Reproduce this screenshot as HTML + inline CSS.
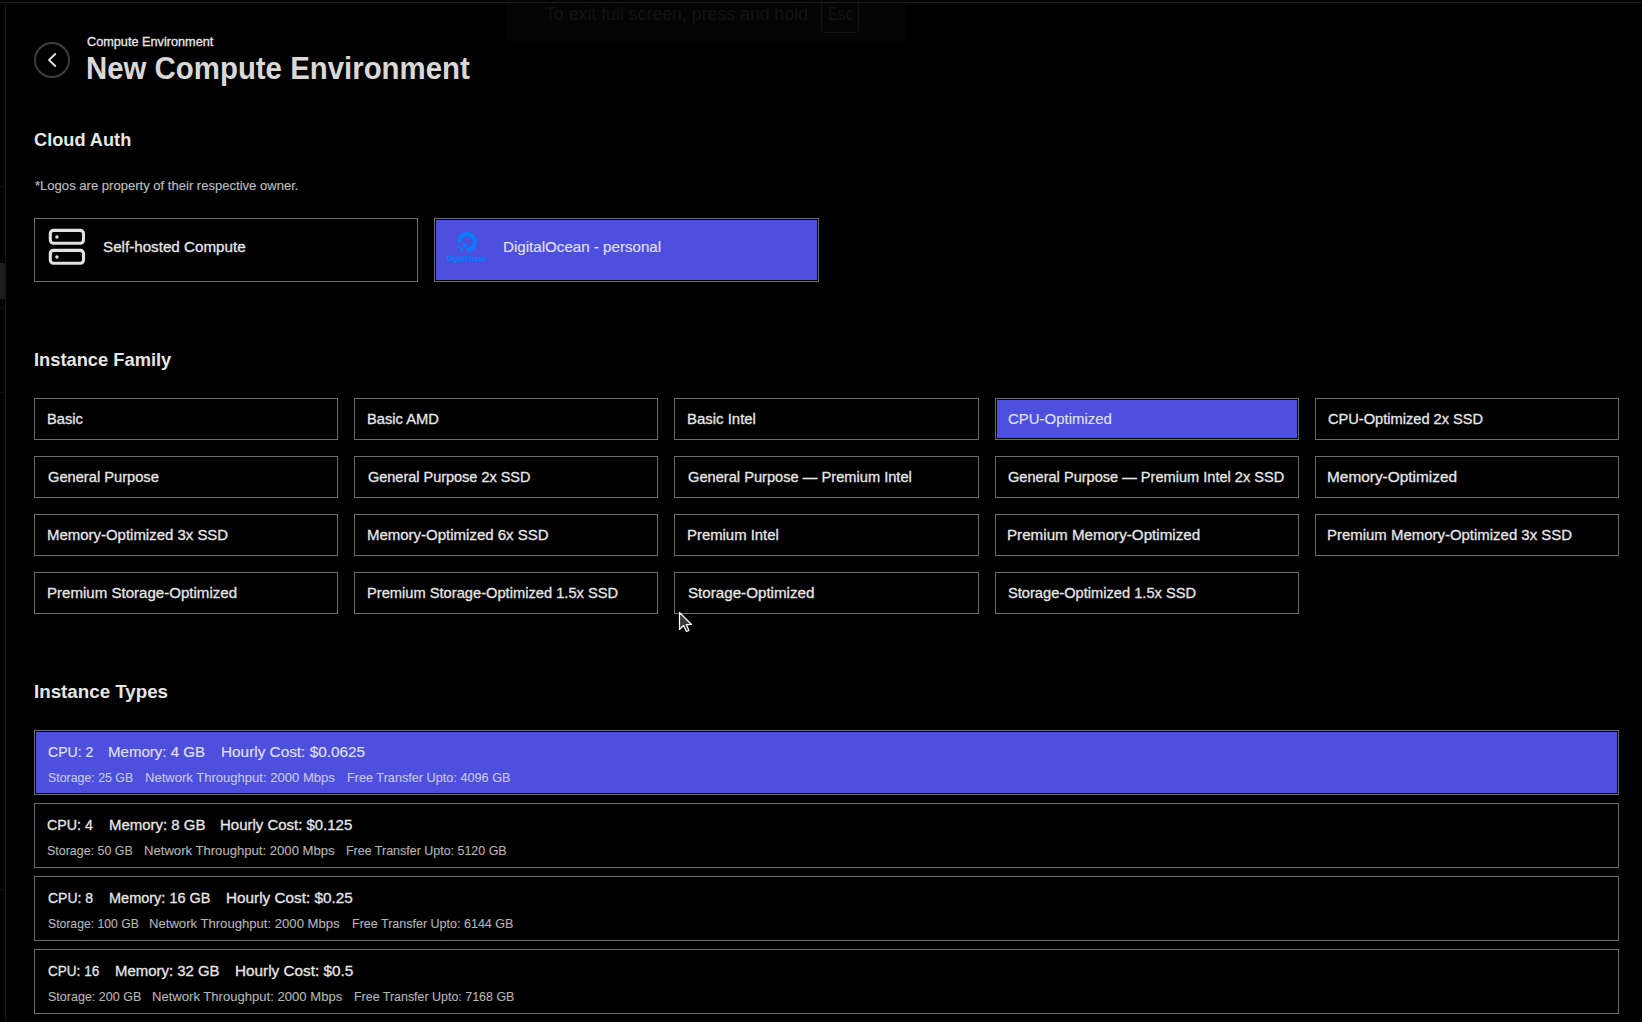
<!DOCTYPE html>
<html><head><meta charset="utf-8"><style>
html,body{margin:0;padding:0;background:#000;width:1642px;height:1022px;overflow:hidden}
.abs{position:absolute}
.t{position:absolute;font-family:"Liberation Sans",sans-serif;white-space:pre;transform-origin:0 0}
.b{position:absolute;box-sizing:border-box;border:1px solid #6b6b6b}
.b.sel{background:#4d4fdd;box-shadow:inset 0 0 0 1px #000}
</style></head><body>

<div class="abs" style="left:505px;top:0;width:401px;height:41px;background:#040404"></div>
<div class="abs" style="left:545px;top:2px;font-family:'Liberation Sans';font-size:18px;line-height:24px;color:#131313;white-space:pre;transform-origin:0 0;transform:scaleX(0.985)">To exit full screen, press and hold</div>
<div class="abs" style="left:821px;top:-6px;width:38px;height:39px;border:1px solid #121212;border-radius:3px;box-sizing:border-box"></div>
<div class="abs" style="left:828px;top:2px;font-family:'Liberation Sans';font-size:18px;line-height:24px;color:#131313;transform-origin:0 0;transform:scaleX(0.84)">Esc</div>


<div class="abs" style="left:0;top:2px;width:1642px;height:1px;background:#1c1c1c"></div>
<div class="abs" style="left:5px;top:3px;width:1px;height:1019px;background:#161616"></div>
<div class="abs" style="left:0;top:263px;width:5px;height:36px;background:#1c1c1c"></div>
<div class="abs" style="left:0;top:186px;width:5px;height:1px;background:#0f0f0f"></div>
<div class="abs" style="left:0;top:307px;width:5px;height:1px;background:#0f0f0f"></div>
<div class="abs" style="left:0;top:392px;width:5px;height:1px;background:#0f0f0f"></div>
<div class="abs" style="left:0;top:889px;width:5px;height:1px;background:#0f0f0f"></div>

<div class="b" style="left:34.00px;top:398px;width:304.20px;height:42px"></div><div class="b" style="left:354.20px;top:398px;width:304.20px;height:42px"></div><div class="b" style="left:674.40px;top:398px;width:304.20px;height:42px"></div><div class="b sel" style="left:994.60px;top:398px;width:304.20px;height:42px"></div><div class="b" style="left:1314.80px;top:398px;width:304.20px;height:42px"></div><div class="b" style="left:34.00px;top:456px;width:304.20px;height:42px"></div><div class="b" style="left:354.20px;top:456px;width:304.20px;height:42px"></div><div class="b" style="left:674.40px;top:456px;width:304.20px;height:42px"></div><div class="b" style="left:994.60px;top:456px;width:304.20px;height:42px"></div><div class="b" style="left:1314.80px;top:456px;width:304.20px;height:42px"></div><div class="b" style="left:34.00px;top:514px;width:304.20px;height:42px"></div><div class="b" style="left:354.20px;top:514px;width:304.20px;height:42px"></div><div class="b" style="left:674.40px;top:514px;width:304.20px;height:42px"></div><div class="b" style="left:994.60px;top:514px;width:304.20px;height:42px"></div><div class="b" style="left:1314.80px;top:514px;width:304.20px;height:42px"></div><div class="b" style="left:34.00px;top:572px;width:304.20px;height:42px"></div><div class="b" style="left:354.20px;top:572px;width:304.20px;height:42px"></div><div class="b" style="left:674.40px;top:572px;width:304.20px;height:42px"></div><div class="b" style="left:994.60px;top:572px;width:304.20px;height:42px"></div><div class="b sel" style="left:34px;top:730px;width:1585px;height:65px"></div><div class="b" style="left:34px;top:803px;width:1585px;height:65px"></div><div class="b" style="left:34px;top:876px;width:1585px;height:65px"></div><div class="b" style="left:34px;top:949px;width:1585px;height:65px"></div><div class="b" style="left:34px;top:218px;width:384.25px;height:64px"></div><div class="b sel" style="left:434.25px;top:218px;width:384.25px;height:64px"></div>

<svg class="abs" style="left:0;top:0" width="1642" height="1022" viewBox="0 0 1642 1022">
  <circle cx="52" cy="60" r="17" fill="none" stroke="#3b3c3b" stroke-width="2"/>
  <path d="M55.3 54 L49 60 L55.3 66" fill="none" stroke="#e2e2e2" stroke-width="1.8" stroke-linecap="round" stroke-linejoin="round"/>
  <rect x="50.3" y="230.4" width="33.2" height="12.9" rx="3.2" fill="none" stroke="#e2e2e2" stroke-width="3.1"/>
  <rect x="50.3" y="250.4" width="33.2" height="12.9" rx="3.2" fill="none" stroke="#e2e2e2" stroke-width="3.1"/>
  <circle cx="56.9" cy="237" r="1.7" fill="#e2e2e2"/>
  <circle cx="56.9" cy="257" r="1.7" fill="#e2e2e2"/>
  <!-- DigitalOcean logo -->
  <path d="M456.9 242 A10 10 0 1 1 467 252 L467 248 A6 6 0 1 0 461 242 Z" fill="#0080ff"/>
  <rect x="463.1" y="244" width="3.8" height="3.6" fill="#0080ff"/>
  <rect x="460" y="248.2" width="3" height="2.8" fill="#0080ff"/>
  <rect x="457.7" y="245.6" width="2.3" height="2.4" fill="#0080ff"/>
  <text x="446.9" y="261.2" font-family="Liberation Sans" font-weight="400" font-size="8" fill="#0080ff" stroke="#0080ff" stroke-width="0.35" textLength="40" lengthAdjust="spacingAndGlyphs">DigitalOcean</text>
  <!-- cursor -->
  <path d="M679.5 612.5 L679.5 629.5 L683.5 625.5 L686.5 631.5 L689 630.5 L686.3 624.6 L691.5 624.5 Z" fill="#3a3a3a" stroke="#ffffff" stroke-width="1.2" stroke-linejoin="round"/>
</svg>
<div class="t" style="left:86.50px;top:36px;font-size:12.5px;line-height:12.5px;font-weight:400;color:#e6e6e6;-webkit-text-stroke:0.3px #e6e6e6;transform:scaleX(1.0153)">Compute Environment</div><div class="t" style="left:85.58px;top:53px;font-size:30.6px;line-height:30.6px;font-weight:700;color:#d8d8d8;transform:scaleX(0.9608)">New Compute Environment</div><div class="t" style="left:34.40px;top:131px;font-size:18.4px;line-height:18.4px;font-weight:700;color:#e6e6e6;transform:scaleX(0.9885)">Cloud Auth</div><div class="t" style="left:34.80px;top:180px;font-size:12.8px;line-height:12.8px;font-weight:400;color:#bdbdbd;-webkit-text-stroke:0.15px #bdbdbd;transform:scaleX(1.0204)">*Logos are property of their respective owner.</div><div class="t" style="left:103.30px;top:239px;font-size:15px;line-height:15px;font-weight:400;color:#e6e6e6;-webkit-text-stroke:0.3px #e6e6e6;transform:scaleX(1.0123)">Self-hosted Compute</div><div class="t" style="left:502.79px;top:239px;font-size:15px;line-height:15px;font-weight:400;color:#e0e0ea;-webkit-text-stroke:0.15px #e0e0ea;transform:scaleX(1.0089)">DigitalOcean - personal</div><div class="t" style="left:33.61px;top:351px;font-size:18.4px;line-height:18.4px;font-weight:700;color:#e6e6e6;transform:scaleX(0.9945)">Instance Family</div><div class="t" style="left:33.58px;top:683px;font-size:18.4px;line-height:18.4px;font-weight:700;color:#e6e6e6;transform:scaleX(1.0193)">Instance Types</div><div class="t" style="left:46.82px;top:411px;font-size:15px;line-height:15px;font-weight:400;color:#e6e6e6;-webkit-text-stroke:0.3px #e6e6e6;transform:scaleX(0.9784)">Basic</div><div class="t" style="left:366.92px;top:411px;font-size:15px;line-height:15px;font-weight:400;color:#e6e6e6;-webkit-text-stroke:0.3px #e6e6e6;transform:scaleX(0.9803)">Basic AMD</div><div class="t" style="left:686.90px;top:411px;font-size:15px;line-height:15px;font-weight:400;color:#e6e6e6;-webkit-text-stroke:0.3px #e6e6e6;transform:scaleX(0.9961)">Basic Intel</div><div class="t" style="left:1007.90px;top:411px;font-size:15px;line-height:15px;font-weight:400;color:#e0e0ea;-webkit-text-stroke:0.15px #e0e0ea;transform:scaleX(0.9967)">CPU-Optimized</div><div class="t" style="left:1328.10px;top:411px;font-size:15px;line-height:15px;font-weight:400;color:#e6e6e6;-webkit-text-stroke:0.3px #e6e6e6;transform:scaleX(0.9744)">CPU-Optimized 2x SSD</div><div class="t" style="left:47.80px;top:469px;font-size:15px;line-height:15px;font-weight:400;color:#e6e6e6;-webkit-text-stroke:0.3px #e6e6e6;transform:scaleX(0.9774)">General Purpose</div><div class="t" style="left:367.90px;top:469px;font-size:15px;line-height:15px;font-weight:400;color:#e6e6e6;-webkit-text-stroke:0.3px #e6e6e6;transform:scaleX(0.9645)">General Purpose 2x SSD</div><div class="t" style="left:687.90px;top:469px;font-size:15px;line-height:15px;font-weight:400;color:#e6e6e6;-webkit-text-stroke:0.3px #e6e6e6;transform:scaleX(0.9763)">General Purpose — Premium Intel</div><div class="t" style="left:1007.90px;top:469px;font-size:15px;line-height:15px;font-weight:400;color:#e6e6e6;-webkit-text-stroke:0.3px #e6e6e6;transform:scaleX(0.9717)">General Purpose — Premium Intel 2x SSD</div><div class="t" style="left:1327.07px;top:469px;font-size:15px;line-height:15px;font-weight:400;color:#e6e6e6;-webkit-text-stroke:0.3px #e6e6e6;transform:scaleX(1.0268)">Memory-Optimized</div><div class="t" style="left:46.80px;top:527px;font-size:15px;line-height:15px;font-weight:400;color:#e6e6e6;-webkit-text-stroke:0.3px #e6e6e6;transform:scaleX(0.9968)">Memory-Optimized 3x SSD</div><div class="t" style="left:366.90px;top:527px;font-size:15px;line-height:15px;font-weight:400;color:#e6e6e6;-webkit-text-stroke:0.3px #e6e6e6">Memory-Optimized 6x SSD</div><div class="t" style="left:686.91px;top:527px;font-size:15px;line-height:15px;font-weight:400;color:#e6e6e6;-webkit-text-stroke:0.3px #e6e6e6;transform:scaleX(0.9924)">Premium Intel</div><div class="t" style="left:1006.89px;top:527px;font-size:15px;line-height:15px;font-weight:400;color:#e6e6e6;-webkit-text-stroke:0.3px #e6e6e6;transform:scaleX(1.0120)">Premium Memory-Optimized</div><div class="t" style="left:1327.10px;top:527px;font-size:15px;line-height:15px;font-weight:400;color:#e6e6e6;-webkit-text-stroke:0.3px #e6e6e6;transform:scaleX(0.9965)">Premium Memory-Optimized 3x SSD</div><div class="t" style="left:46.80px;top:585px;font-size:15px;line-height:15px;font-weight:400;color:#e6e6e6;-webkit-text-stroke:0.3px #e6e6e6;transform:scaleX(1.0043)">Premium Storage-Optimized</div><div class="t" style="left:366.92px;top:585px;font-size:15px;line-height:15px;font-weight:400;color:#e6e6e6;-webkit-text-stroke:0.3px #e6e6e6;transform:scaleX(0.9780)">Premium Storage-Optimized 1.5x SSD</div><div class="t" style="left:687.90px;top:585px;font-size:15px;line-height:15px;font-weight:400;color:#e6e6e6;-webkit-text-stroke:0.3px #e6e6e6;transform:scaleX(1.0111)">Storage-Optimized</div><div class="t" style="left:1007.90px;top:585px;font-size:15px;line-height:15px;font-weight:400;color:#e6e6e6;-webkit-text-stroke:0.3px #e6e6e6;transform:scaleX(0.9764)">Storage-Optimized 1.5x SSD</div><div class="t" style="left:47.60px;top:744px;font-size:15px;line-height:15px;font-weight:400;color:#e0e0ea;-webkit-text-stroke:0.15px #e0e0ea;transform:scaleX(0.9395)">CPU: 2</div><div class="t" style="left:108.30px;top:744px;font-size:15px;line-height:15px;font-weight:400;color:#e0e0ea;-webkit-text-stroke:0.15px #e0e0ea;transform:scaleX(1.0023)">Memory: 4 GB</div><div class="t" style="left:220.88px;top:744px;font-size:15px;line-height:15px;font-weight:400;color:#e0e0ea;-webkit-text-stroke:0.15px #e0e0ea;transform:scaleX(1.0224)">Hourly Cost: $0.0625</div><div class="t" style="left:47.60px;top:772px;font-size:12.6px;line-height:12.6px;font-weight:400;color:#c8c8e6;-webkit-text-stroke:0.1px #c8c8e6;transform:scaleX(0.9814)">Storage: 25 GB</div><div class="t" style="left:144.66px;top:772px;font-size:12.6px;line-height:12.6px;font-weight:400;color:#c8c8e6;-webkit-text-stroke:0.1px #c8c8e6;transform:scaleX(1.0362)">Network Throughput: 2000 Mbps</div><div class="t" style="left:346.69px;top:772px;font-size:12.6px;line-height:12.6px;font-weight:400;color:#c8c8e6;-webkit-text-stroke:0.1px #c8c8e6;transform:scaleX(1.0067)">Free Transfer Upto: 4096 GB</div><div class="t" style="left:47.40px;top:817px;font-size:15px;line-height:15px;font-weight:400;color:#e6e6e6;-webkit-text-stroke:0.3px #e6e6e6;transform:scaleX(0.9499)">CPU: 4</div><div class="t" style="left:108.80px;top:817px;font-size:15px;line-height:15px;font-weight:400;color:#e6e6e6;-webkit-text-stroke:0.3px #e6e6e6;transform:scaleX(0.9971)">Memory: 8 GB</div><div class="t" style="left:220.30px;top:817px;font-size:15px;line-height:15px;font-weight:400;color:#e6e6e6;-webkit-text-stroke:0.3px #e6e6e6;transform:scaleX(0.9975)">Hourly Cost: $0.125</div><div class="t" style="left:47.40px;top:845px;font-size:12.6px;line-height:12.6px;font-weight:400;color:#b4b4b4;-webkit-text-stroke:0.12px #b4b4b4;transform:scaleX(0.9883)">Storage: 50 GB</div><div class="t" style="left:144.26px;top:845px;font-size:12.6px;line-height:12.6px;font-weight:400;color:#b4b4b4;-webkit-text-stroke:0.12px #b4b4b4;transform:scaleX(1.0406)">Network Throughput: 2000 Mbps</div><div class="t" style="left:346.31px;top:845px;font-size:12.6px;line-height:12.6px;font-weight:400;color:#b4b4b4;-webkit-text-stroke:0.12px #b4b4b4;transform:scaleX(0.9893)">Free Transfer Upto: 5120 GB</div><div class="t" style="left:47.60px;top:890px;font-size:15px;line-height:15px;font-weight:400;color:#e6e6e6;-webkit-text-stroke:0.3px #e6e6e6;transform:scaleX(0.9332)">CPU: 8</div><div class="t" style="left:109.03px;top:890px;font-size:15px;line-height:15px;font-weight:400;color:#e6e6e6;-webkit-text-stroke:0.3px #e6e6e6;transform:scaleX(0.9661)">Memory: 16 GB</div><div class="t" style="left:226.28px;top:890px;font-size:15px;line-height:15px;font-weight:400;color:#e6e6e6;-webkit-text-stroke:0.3px #e6e6e6;transform:scaleX(1.0205)">Hourly Cost: $0.25</div><div class="t" style="left:47.60px;top:918px;font-size:12.6px;line-height:12.6px;font-weight:400;color:#b4b4b4;-webkit-text-stroke:0.12px #b4b4b4;transform:scaleX(0.9677)">Storage: 100 GB</div><div class="t" style="left:149.46px;top:918px;font-size:12.6px;line-height:12.6px;font-weight:400;color:#b4b4b4;-webkit-text-stroke:0.12px #b4b4b4;transform:scaleX(1.0406)">Network Throughput: 2000 Mbps</div><div class="t" style="left:351.71px;top:918px;font-size:12.6px;line-height:12.6px;font-weight:400;color:#b4b4b4;-webkit-text-stroke:0.12px #b4b4b4;transform:scaleX(0.9936)">Free Transfer Upto: 6144 GB</div><div class="t" style="left:47.60px;top:963px;font-size:15px;line-height:15px;font-weight:400;color:#e6e6e6;-webkit-text-stroke:0.3px #e6e6e6;transform:scaleX(0.9033)">CPU: 16</div><div class="t" style="left:114.51px;top:963px;font-size:15px;line-height:15px;font-weight:400;color:#e6e6e6;-webkit-text-stroke:0.3px #e6e6e6;transform:scaleX(0.9950)">Memory: 32 GB</div><div class="t" style="left:234.78px;top:963px;font-size:15px;line-height:15px;font-weight:400;color:#e6e6e6;-webkit-text-stroke:0.3px #e6e6e6;transform:scaleX(1.0206)">Hourly Cost: $0.5</div><div class="t" style="left:47.60px;top:991px;font-size:12.6px;line-height:12.6px;font-weight:400;color:#b4b4b4;-webkit-text-stroke:0.12px #b4b4b4;transform:scaleX(0.9945)">Storage: 200 GB</div><div class="t" style="left:152.26px;top:991px;font-size:12.6px;line-height:12.6px;font-weight:400;color:#b4b4b4;-webkit-text-stroke:0.12px #b4b4b4;transform:scaleX(1.0384)">Network Throughput: 2000 Mbps</div><div class="t" style="left:354.21px;top:991px;font-size:12.6px;line-height:12.6px;font-weight:400;color:#b4b4b4;-webkit-text-stroke:0.12px #b4b4b4;transform:scaleX(0.9874)">Free Transfer Upto: 7168 GB</div>
</body></html>
